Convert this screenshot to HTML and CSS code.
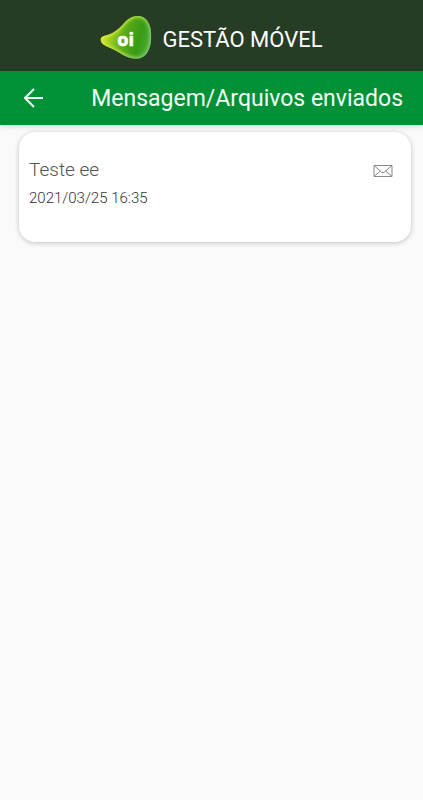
FILE: index.html
```html
<!DOCTYPE html>
<html lang="pt-BR">
<head>
<meta charset="utf-8">
<meta name="viewport" content="width=device-width, initial-scale=1">
<title>Gestão Móvel</title>
<link rel="stylesheet" href="styles.css">
</head>
<body>
<header class="brand">
  <svg class="logo" viewBox="0 0 156 132" role="img" aria-label="oi">
    <defs>
      <linearGradient id="body" x1="0" y1="0.4" x2="1" y2="0.6">
        <stop offset="0" stop-color="#e4ee2c"/>
        <stop offset="0.2" stop-color="#a4d01e"/>
        <stop offset="0.45" stop-color="#5cac18"/>
        <stop offset="0.75" stop-color="#389b14"/>
        <stop offset="1" stop-color="#4fab38"/>
      </linearGradient>
      <linearGradient id="rim" x1="0" y1="0" x2="1" y2="0.4">
        <stop offset="0" stop-color="#e6f03c"/>
        <stop offset="0.6" stop-color="#b5dc45"/>
        <stop offset="1" stop-color="#7cc46a"/>
      </linearGradient>
      <filter id="soft" x="-10%" y="-10%" width="120%" height="120%"><feGaussianBlur stdDeviation="4"/></filter>
      <clipPath id="shape"><path d="M2 76C1 66 10 63 22 60C46 54 64 34 78 18C90 6 108 0 122 4C144 10 154 34 154 62C154 100 140 130 110 131C82 132 62 114 42 104C22 95 4 90 2 76Z"/></clipPath>
    </defs>
    <g clip-path="url(#shape)">
      <rect width="156" height="132" fill="url(#body)"/>
      <path d="M2 76C1 66 10 63 22 60C46 54 64 34 78 18C90 6 108 0 122 4C144 10 154 34 154 62C154 100 140 130 110 131C82 132 62 114 42 104C22 95 4 90 2 76Z" fill="none" stroke="url(#rim)" stroke-width="12" filter="url(#soft)"/>
    </g>
    <text class="logo-text" x="52" y="94">oi</text>
  </svg>
  <span class="brand-name">GESTÃO MÓVEL</span>
</header>
<nav class="bar">
  <button class="back" type="button" aria-label="Voltar">
    <svg class="arrow" viewBox="0 0 20 20" aria-hidden="true"><path d="M19 10H2M10 1L1 10L10 19"/></svg>
  </button>
  <h1 class="title">Mensagem/Arquivos enviados</h1>
</nav>
<main class="list">
  <article class="card">
    <div class="details">
      <h2 class="subject">Teste ee</h2>
      <time class="date" datetime="2021-03-25T16:35">2021/03/25 16:35</time>
    </div>
    <svg class="mail" viewBox="0 0 20 14" aria-hidden="true"><path d="M1 1.5H19V12.5H1ZM1 1.5L8.5 8Q10 9 11.5 8L19 1.5M1 12.5L7.5 7M19 12.5L12.5 7"/></svg>
  </article>
</main>
</body>
</html>
```
FILE: styles.css
```css
* {
  box-sizing: border-box;
}

body {
  margin: 0;
  min-height: 100vh;
  background: #fafafa;
  font-family: Roboto, "Liberation Sans", sans-serif;
}

.brand {
  display: flex;
  align-items: center;
  justify-content: center;
  gap: 10px;
  padding: 15px 0 12px;
  background: #273c24;
  color: #fff;
}

.logo {
  width: 52px;
  height: 44px;
}

.logo-text {
  fill: #fff;
  stroke: #fff;
  stroke-width: 2;
  font-family: "Open Sans", sans-serif;
  font-size: 54px;
  font-weight: 700;
}

.brand-name {
  padding-top: 6px;
  font-size: 22px;
  font-weight: 400;
  line-height: 28px;
}

.bar {
  display: flex;
  align-items: center;
  justify-content: space-between;
  height: 54px;
  padding: 0 20px 0 16px;
  background: #039138;
  color: #effff2;
  box-shadow: 0 2px 5px rgba(0, 0, 0, 0.12);
}

.back {
  display: flex;
  padding: 8px;
  border: 0;
  background: none;
  color: inherit;
}

.arrow {
  width: 20px;
  height: 20px;
  fill: none;
  stroke: currentColor;
  stroke-width: 2;
}

.title {
  margin: 0;
  padding-top: 2px;
  font-size: 23px;
  font-weight: 400;
  line-height: 32px;
  white-space: nowrap;
}

.list {
  padding: 7px 12px 12px 19px;
}

.card {
  display: flex;
  align-items: flex-start;
  justify-content: space-between;
  padding: 26px 18px 32px 10px;
  border-radius: 16px;
  background: #fff;
  box-shadow: 0 1px 5px rgba(0, 0, 0, 0.24);
}

.subject {
  margin: 0 0 4px;
  color: #555;
  font-size: 19px;
  font-weight: 300;
  line-height: 24px;
}

.date {
  display: block;
  color: #333;
  font-size: 15px;
  font-weight: 300;
  line-height: 24px;
}

.mail {
  width: 20px;
  height: 14px;
  margin-top: 6px;
  fill: none;
  stroke: #888;
  stroke-width: 1;
}
```
